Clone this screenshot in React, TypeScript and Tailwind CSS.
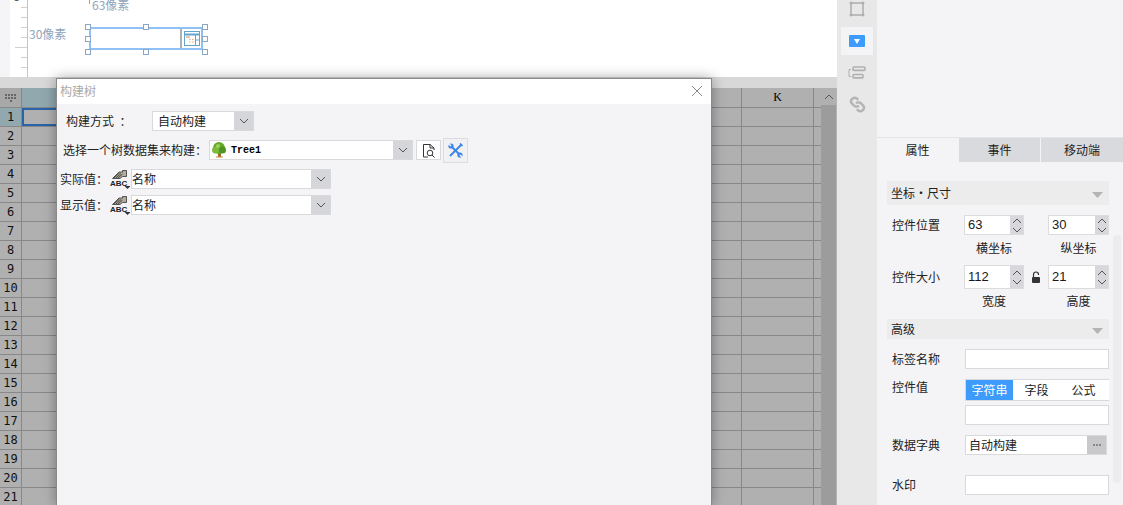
import React from "react";

const cjk = "font-['Noto_Sans_CJK_SC','Microsoft_YaHei',sans-serif]";

function Chev({ up = false, cls = "" }: { up?: boolean; cls?: string }) {
  return (
    <svg width="10" height="6" viewBox="0 0 10 6" className={cls}>
      <polyline points={up ? "1,5 5,1 9,5" : "1,1 5,5 9,1"} fill="none" stroke="#555" strokeWidth="1" />
    </svg>
  );
}

function Combo({ w, children }: { w: string; children: React.ReactNode }) {
  return (
    <div className={`${w} h-[20px] flex bg-white border border-[#d9d9dc]`}>
      <div className="flex-1 min-w-0 flex items-center overflow-hidden">{children}</div>
      <div className="w-[19px] bg-[#d5d6da] flex items-center justify-center">
        <Chev />
      </div>
    </div>
  );
}

function AbcIcon() {
  return (
    <div className="relative w-[20px] h-[20px] shrink-0 mr-px">
      <svg width="20" height="20" viewBox="0 0 20 20" className="absolute left-0 top-0">
        <path d="M2.5 9.5 L9 3 H12.5 V1.5 H16.5 V7.5 H12.5 L10 9.5 Z" fill="#b4ac9c" stroke="#333" strokeWidth="0.8" />
        <path d="M4 9 L9.5 4 M6 9 L11 4.5 M8 9 L12.5 5" stroke="#222" strokeWidth="0.7" />
        <path d="M14.5 17 h6 l-3 3 z" fill="#333" />
      </svg>
      <span className="absolute left-0 top-[10px] text-[8px] leading-[9px] font-bold text-[#222] font-['Liberation_Sans',sans-serif]">ABC</span>
    </div>
  );
}

function Spin({ v, w = "w-[60px]", h }: { v: string; w?: string; h: string }) {
  return (
    <div className={`${w} ${h} flex bg-white border border-[#dcdcdf]`}>
      <div className="flex-1 pl-[3px] text-[13px] text-[#1a1a1a] font-['Liberation_Sans',sans-serif] flex items-center">{v}</div>
      <div className="w-[13px] bg-[#d8d8dc] flex flex-col items-center justify-center gap-[3px]">
        <Chev up cls="w-[10px]" />
        <Chev cls="w-[10px]" />
      </div>
    </div>
  );
}

function SectionHead({ title, h }: { title: string; h: string }) {
  return (
    <div className={`${h} mx-[10px] w-[222px] bg-[#ececec] flex items-center justify-between pl-[4px] pr-[6px] text-[12px] text-[#222]`}>
      <span>{title}</span>
      <svg width="11" height="6" viewBox="0 0 11 6" className="mt-[4px]"><path d="M0 0 H11 L5.5 6 Z" fill="#b4b4b4" /></svg>
    </div>
  );
}

function Field({ cls = "" }: { cls?: string }) {
  return <div className={`w-[144px] h-[20px] bg-white border border-[#d9d9dc] ${cls}`} />;
}

export default function App() {
  const rows = Array.from({ length: 21 }, (_, i) => i + 1);
  const ticks = [7, 17, 27, 37, 57, 67];
  return (
    <div className={`relative w-[1123px] h-[505px] overflow-hidden flex bg-[#f4f4f6] ${cjk}`}>
      {/* left column */}
      <div className="relative w-[837px] h-full flex flex-col shrink-0">
        <div className="relative h-[77px] bg-white flex shrink-0">
          <div className="w-[10px] bg-[#f5f5f7]" />
          <div className="relative w-[18px] border-r border-[#c4c4c4]">
            <span className="absolute left-[3px] top-[-9px] text-[12px] leading-[14px] text-[#444] font-['Liberation_Mono',monospace]">8</span>
            {ticks.map((t) => (
              <div key={t} style={{ top: t }} className="absolute right-0 w-[6px] h-px bg-[#d0d0d0]" />
            ))}
            <div className="absolute right-0 top-[47px] w-[12px] h-px bg-[#d0d0d0]" />
          </div>
          <span className="absolute left-[92px] top-[-3px] text-[12px] leading-[16px] text-[#8fa5bb]">63像素</span>
          <div className="absolute left-[89px] top-0 w-px h-[4px] bg-[#8fa5bb]" />
          <span className="absolute left-[29px] top-[26px] text-[12px] leading-[16px] text-[#8fa5bb]">30像素</span>
          <div className="absolute left-[89px] top-[27px] w-[114px] h-[23px] border-2 border-[#8fc1f7] bg-white flex justify-end">
            <div className="w-[21px] h-full border-l-2 border-[#b0b0b0] flex items-center justify-center">
              <svg width="16" height="15" viewBox="0 0 16 15">
                <rect x="0.5" y="0.5" width="15" height="14" fill="none" stroke="#62a6cf" />
                <path d="M0.5 3.5H15.5" stroke="#62a6cf" strokeWidth="2" />
                <path d="M11.5 3.5V14.5 M11.5 9H15.5" stroke="#62a6cf" />
                <path d="M2 6H6" stroke="#e58b4a" />
                <path d="M5 8.5h1.5 M8 8.5h1.5 M5 11h1.5 M8 11h1.5" stroke="#ecaf7e" />
              </svg>
            </div>
          </div>
          {[
            [85, 24], [143, 24], [202, 24],
            [85, 36], [202, 36],
            [85, 49], [143, 49], [202, 49],
          ].map(([x, y]) => (
            <div key={`${x}-${y}`} style={{ left: x, top: y }} className="absolute w-[6px] h-[6px] bg-white border border-[#8ba6c2]" />
          ))}
        </div>
        <div className="h-[11px] bg-[#d8d8d8] shrink-0" />
        <div className="flex flex-1 min-h-0 bg-[#b0b0b0]">
          <div className="flex-1 min-w-0 overflow-hidden">
            <div className="flex h-[20px] border-b border-[#888]">
              <div className="w-[22px] border-r border-[#888] flex flex-wrap content-center justify-center gap-px px-[5px] bg-[#a8a8a8]">
                {Array.from({ length: 9 }, (_, i) => (
                  <div key={i} className="w-[2px] h-[2px] bg-[#666]" />
                ))}
              </div>
              <div className="w-[36px] bg-[#90a8ae]" />
              <div className="w-[683px]" />
              <div className="w-[72px] border-l border-[#888] text-center text-[12px] leading-[18px] text-black font-['Liberation_Serif',serif]">K</div>
              <div className="flex-1 border-l border-[#888]" />
            </div>
            {rows.map((r) => (
              <div key={r} className="flex h-[19px] border-b border-[#888]">
                <div className={`w-[22px] border-r border-[#888] text-center text-[12px] leading-[18px] text-[#111] font-['DejaVu_Sans_Mono',monospace] ${r === 1 ? "bg-[#90a8ae]" : ""}`}>{r}</div>
                <div className={`w-[36px] ${r === 1 ? "border-2 border-[#2a63a8]" : ""}`} />
                <div className="w-[683px]" />
                <div className="w-[72px] border-l border-[#888]" />
                <div className="flex-1 border-l border-[#888]" />
              </div>
            ))}
          </div>
          <div className="w-[16px] bg-[#9c9c9c] border-r border-[#b4b4b4] shrink-0">
            <div className="h-[17px] bg-[#b0b0b0] flex items-center justify-center">
              <Chev up />
            </div>
          </div>
        </div>

        {/* modal */}
        <div className="absolute left-[56px] top-[78px] w-[656px] bottom-0 flex flex-col bg-[#f4f4f6] border-x border-t border-[#8a8a8a] shadow-[0_0_12px_rgba(0,0,0,0.35)]">
          <div className="h-[25px] bg-white flex items-center justify-between pl-[3px] pr-[8px] pb-[2px] shrink-0">
            <span className="text-[12px] text-[#aaa]">构建树</span>
            <svg width="12" height="12" viewBox="0 0 12 12">
              <path d="M1 1L11 11M11 1L1 11" stroke="#8a8a8a" strokeWidth="1" />
            </svg>
          </div>
          <div className="flex flex-col pt-[7px] text-[12px] text-[#222]">
            <div className="flex items-center h-[20px]">
              <span className="ml-[9px] w-[86px]">构建方式&nbsp;&nbsp;：</span>
              <Combo w="w-[102px]">
                <span className="pl-[5px]">自动构建</span>
              </Combo>
            </div>
            <div className="flex items-center h-[20px] mt-[9px]">
              <span className="ml-[6px] w-[146px]">选择一个树数据集来构建：</span>
              <Combo w="w-[204px]">
                <svg width="16" height="16" viewBox="0 0 16 16" className="ml-px">
                  <rect x="7" y="11" width="3" height="4" fill="#a5682a" />
                  <path d="M5 15h7" stroke="#c28a3a" />
                  <circle cx="8" cy="6" r="6" fill="#63a82b" />
                  <circle cx="4.5" cy="8" r="3.5" fill="#7dbb3c" />
                  <circle cx="11.5" cy="8" r="3.5" fill="#4d9423" />
                  <circle cx="7" cy="4" r="2" fill="#9bd35a" />
                </svg>
                <span className="ml-[4px] text-[10px] text-black font-['Liberation_Mono',monospace] font-bold">Tree1</span>
              </Combo>
              <div className="ml-[3px] w-[25px] h-[20px] bg-white border border-[#d9d9dc] flex items-center justify-center">
                <svg width="14" height="15" viewBox="0 0 14 15" fill="none" stroke="#333" strokeWidth="1">
                  <path d="M6 14H1.5V1.5H8L12 5V7" />
                  <path d="M8 1.5V5H12" />
                  <circle cx="8" cy="10" r="2.8" />
                  <path d="M10 12L12.5 14.5" />
                </svg>
              </div>
              <div className="ml-[2px] w-[25px] h-[25px] bg-[#f1f1f3] border border-[#dcdcdf] flex items-center justify-center">
                <svg width="15" height="15" viewBox="0 0 15 15" fill="none">
                  <path d="M3 3L12.5 12.5" stroke="#3b86e8" strokeWidth="2" />
                  <path d="M13.5 1.5L2 13" stroke="#3b86e8" strokeWidth="2" />
                  <circle cx="3" cy="3" r="2.6" fill="#3b86e8" />
                  <path d="M0 0L3 3" stroke="#f1f1f3" strokeWidth="1.6" />
                  <circle cx="12" cy="12" r="2.6" fill="#3b86e8" />
                  <path d="M15 15L12 12" stroke="#f1f1f3" strokeWidth="1.6" />
                  <path d="M12 0.5L14.5 3" stroke="#3b86e8" strokeWidth="1.6" />
                </svg>
              </div>
            </div>
            <div className="flex items-center h-[20px] mt-[9px]">
              <span className="ml-[3px] w-[50px]">实际值：</span>
              <AbcIcon />
              <Combo w="w-[200px]"><span>名称</span></Combo>
            </div>
            <div className="flex items-center h-[20px] mt-[6px]">
              <span className="ml-[3px] w-[50px]">显示值：</span>
              <AbcIcon />
              <Combo w="w-[200px]"><span>名称</span></Combo>
            </div>
          </div>
        </div>
      </div>

      {/* tool strip */}
      <div className="w-[40px] h-full bg-[#e8e8e8] shrink-0 flex flex-col items-center">
        <svg width="16" height="16" viewBox="0 0 16 16" className="mt-[1px]" fill="none" stroke="#b0b0b0">
          <rect x="2" y="2" width="12" height="12" strokeWidth="1.6" />
          <path d="M1 1h2v2H1zM13 1h2v2h-2zM1 13h2v2H1zM13 13h2v2h-2z" fill="#b0b0b0" strokeWidth="0.6" />
        </svg>
        <div className="mt-[10px] w-[32px] h-[28px] bg-[#f4f4f6] flex items-center justify-center">
          <div className="w-[16px] h-[12px] bg-[#3d9bfb] rounded-[1px] flex items-center justify-center">
            <svg width="6" height="5" viewBox="0 0 6 5"><path d="M0 0H6L3 5Z" fill="#fff" /></svg>
          </div>
        </div>
        <svg width="18" height="14" viewBox="0 0 18 14" className="mt-[11px]" fill="none" stroke="#b0b0b0" strokeWidth="1.6">
          <rect x="5" y="1" width="12" height="3.4" rx="1" />
          <rect x="5" y="8.5" width="10" height="3.4" rx="1" />
          <path d="M3 3.5H1V10.5H3" strokeWidth="1" />
        </svg>
        <svg width="17" height="17" viewBox="0 0 24 24" className="mt-[16px]" fill="none" stroke="#b4b4b4" strokeWidth="3.4">
          <path d="M14 13.5a5 5 0 0 1-7 0l-3-3a5 5 0 0 1 7-7l2 2" />
          <path d="M10 10.5a5 5 0 0 1 7 0l3 3a5 5 0 0 1-7 7l-2-2" />
        </svg>
      </div>

      {/* properties */}
      <div className="relative flex-1 h-full text-[12px] text-[#222]">
        <div className="h-[137px]" />
        <div className="flex h-[25px] border-t border-[#e4e4e6] text-[12px] text-[#222]">
          <div className="w-[81px] flex items-center justify-center bg-[#f4f4f6]">属性</div>
          <div className="w-[81px] ml-px flex items-center justify-center bg-[#d9dadd]">事件</div>
          <div className="flex-1 ml-px flex items-center justify-center bg-[#d9dadd]">移动端</div>
        </div>
        <div className="h-[19px]" />
        <SectionHead title="坐标・尺寸" h="h-[24px]" />
        <div className="flex items-center mt-[10px] ml-[15px]">
          <span className="w-[72px]">控件位置</span>
          <Spin v="63" w="w-[60px]" h="h-[20px]" />
          <div className="w-[24px]" />
          <Spin v="30" w="w-[61px]" h="h-[20px]" />
        </div>
        <div className="flex ml-[87px] mt-[4px] h-[18px] items-center text-center">
          <span className="w-[60px]">横坐标</span>
          <div className="w-[24px]" />
          <span className="w-[61px]">纵坐标</span>
        </div>
        <div className="flex items-center mt-[8px] ml-[15px]">
          <span className="w-[72px]">控件大小</span>
          <Spin v="112" w="w-[60px]" h="h-[24px]" />
          <div className="w-[24px] flex justify-center">
            <svg width="10" height="13" viewBox="0 0 10 13">
              <path d="M2.5 6V3.5a2.5 2.5 0 0 1 5 0V4" fill="none" stroke="#333" strokeWidth="1.2" />
              <rect x="1" y="6" width="8" height="6" rx="1" fill="#333" />
            </svg>
          </div>
          <Spin v="21" w="w-[61px]" h="h-[24px]" />
        </div>
        <div className="flex ml-[87px] mt-[3px] h-[18px] items-center text-center">
          <span className="w-[60px]">宽度</span>
          <div className="w-[24px]" />
          <span className="w-[61px]">高度</span>
        </div>
        <div className="h-[9px]" />
        <SectionHead title="高级" h="h-[20px]" />
        <div className="flex items-center mt-[10px] ml-[15px]">
          <span className="w-[73px]">标签名称</span>
          <Field />
        </div>
        <div className="flex items-start mt-[10px] ml-[15px]">
          <span className="w-[73px] leading-[16px]">控件值</span>
          <div>
            <div className="w-[144px] h-[22px] flex border-y border-l border-[#d9d9dc] bg-white">
              <div className="w-[47px] bg-[#3d9bfb] text-white flex items-center justify-center">字符串</div>
              <div className="w-[47px] flex items-center justify-center">字段</div>
              <div className="w-[47px] flex items-center justify-center">公式</div>
            </div>
            <Field cls="mt-[4px]" />
          </div>
        </div>
        <div className="flex items-center mt-[10px] ml-[15px]">
          <span className="w-[73px]">数据字典</span>
          <div className="w-[142px] h-[20px] flex bg-white border border-[#d9d9dc]">
            <span className="flex-1 pl-[3px] leading-[18px]">自动构建</span>
            <div className="w-[19px] bg-[#c9c9cc] flex items-center justify-center gap-px">
              <i className="w-[2px] h-[2px] bg-[#888]" />
              <i className="w-[2px] h-[2px] bg-[#888]" />
              <i className="w-[2px] h-[2px] bg-[#888]" />
            </div>
          </div>
        </div>
        <div className="flex items-center mt-[20px] ml-[15px]">
          <span className="w-[73px]">水印</span>
          <Field />
        </div>
        <div className="absolute left-[236px] top-[235px] w-[8px] h-[248px] bg-[#ececee] rounded-[4px]" />
      </div>
    </div>
  );
}
